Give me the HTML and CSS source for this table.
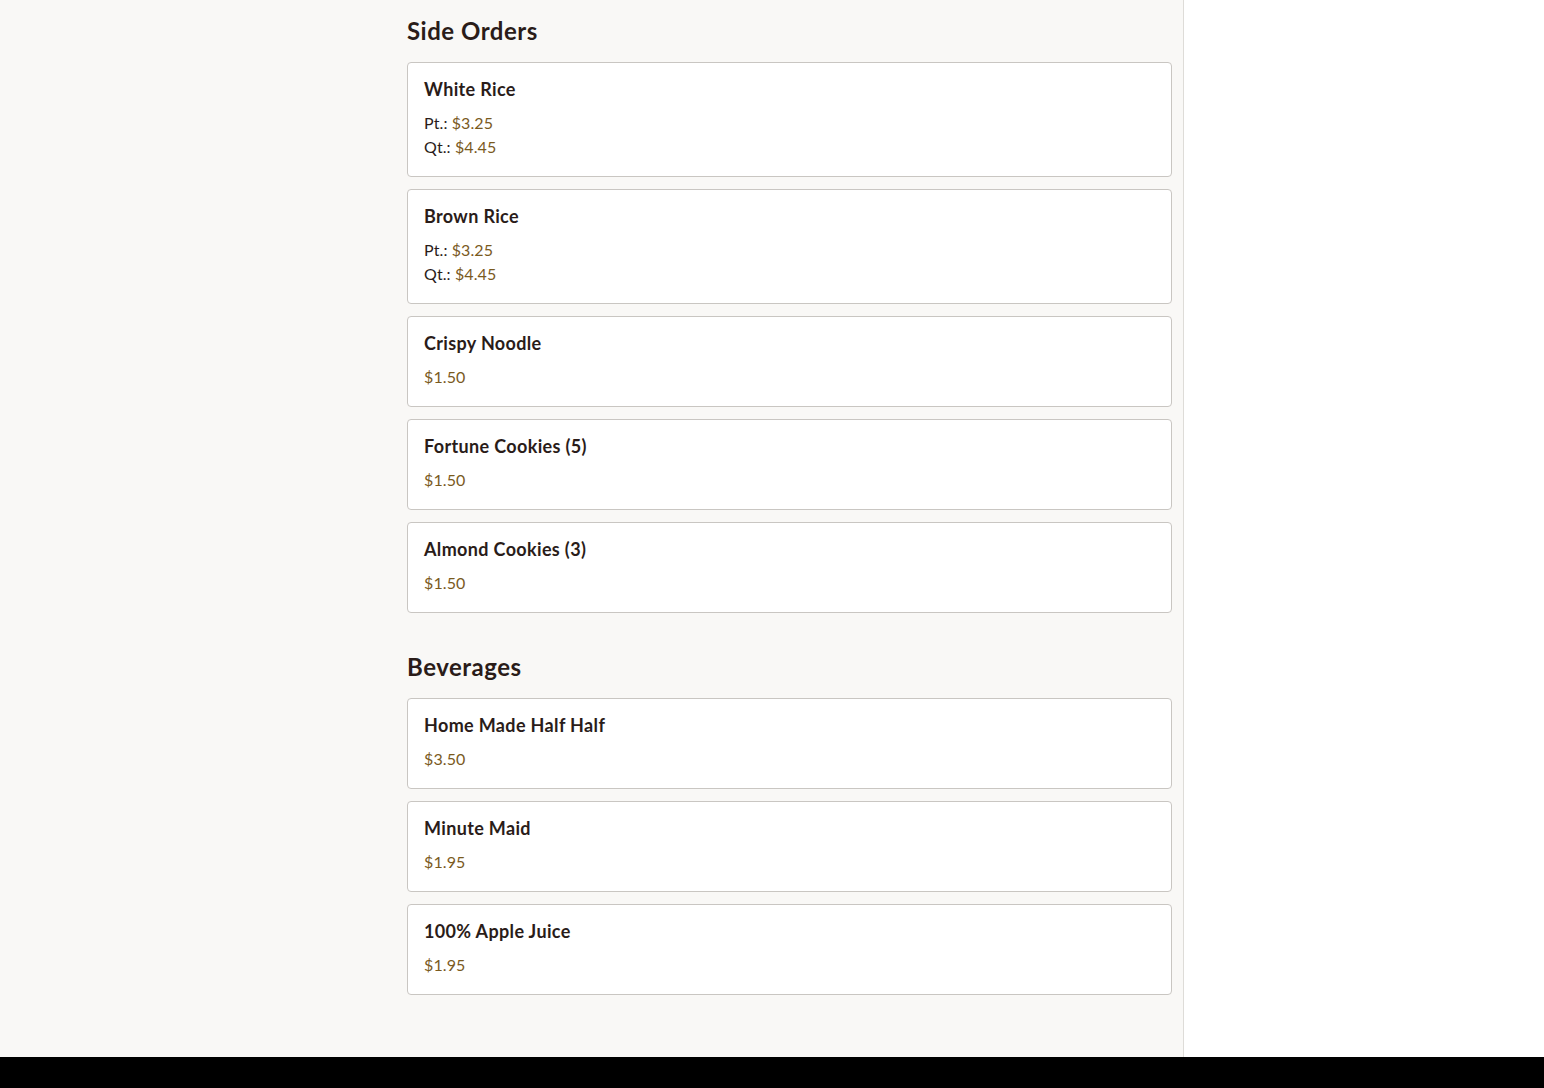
FILE: index.html
```html
<!DOCTYPE html>
<html lang="en">
<head>
<meta charset="utf-8">
<title>Menu</title>
<link rel="stylesheet" href="styles.css">
</head>
<body>
<div class="layout">
  <main class="main">
    <section class="section">
      <h2 class="section-title">Side Orders</h2>
      <div class="cards">
        <div class="card">
          <h3 class="item-name">White Rice</h3>
          <div class="prices">
            <div class="price-row">Pt.: <span class="price">$3.25</span></div>
            <div class="price-row">Qt.: <span class="price">$4.45</span></div>
          </div>
        </div>
        <div class="card">
          <h3 class="item-name">Brown Rice</h3>
          <div class="prices">
            <div class="price-row">Pt.: <span class="price">$3.25</span></div>
            <div class="price-row">Qt.: <span class="price">$4.45</span></div>
          </div>
        </div>
        <div class="card">
          <h3 class="item-name">Crispy Noodle</h3>
          <div class="prices"><div class="price-row"><span class="price">$1.50</span></div></div>
        </div>
        <div class="card">
          <h3 class="item-name">Fortune Cookies (5)</h3>
          <div class="prices"><div class="price-row"><span class="price">$1.50</span></div></div>
        </div>
        <div class="card">
          <h3 class="item-name">Almond Cookies (3)</h3>
          <div class="prices"><div class="price-row"><span class="price">$1.50</span></div></div>
        </div>
      </div>
    </section>
    <section class="section">
      <h2 class="section-title">Beverages</h2>
      <div class="cards">
        <div class="card">
          <h3 class="item-name">Home Made Half Half</h3>
          <div class="prices"><div class="price-row"><span class="price">$3.50</span></div></div>
        </div>
        <div class="card">
          <h3 class="item-name">Minute Maid</h3>
          <div class="prices"><div class="price-row"><span class="price">$1.95</span></div></div>
        </div>
        <div class="card">
          <h3 class="item-name">100% Apple Juice</h3>
          <div class="prices"><div class="price-row"><span class="price">$1.95</span></div></div>
        </div>
      </div>
    </section>
  </main>
  <aside class="side"></aside>
</div>
<footer class="footer"></footer>
</body>
</html>
```
FILE: styles.css
```css
* { box-sizing: border-box; }
html, body { margin: 0; padding: 0; }
body {
  font-family: "Lato", "Open Sans", sans-serif;
  color: #2a1c19;
  background: #ffffff;
}
.layout {
  display: flex;
  height: 1057px;
}
.main {
  width: 1184px;
  flex: none;
  background: #f9f8f6;
  border-right: 1px solid #dedcd8;
  padding: 16px 11px 0 407px;
}
.side {
  flex: 1;
  background: #ffffff;
}
.section { margin-bottom: 39px; }
.section-title {
  margin: 0 0 17px;
  font-size: 24px;
  line-height: 29px;
  font-weight: 700;
  letter-spacing: 0.5px;
}
.cards {
  display: flex;
  flex-direction: column;
  gap: 12px;
}
.card {
  background: #ffffff;
  border: 1px solid #c9c6c2;
  border-radius: 4px;
  padding: 15px 16px 17px;
}
.item-name {
  margin: 0 0 11px;
  font-size: 18px;
  line-height: 22px;
  font-weight: 700;
  letter-spacing: 0.35px;
}
.price-row {
  font-size: 16px;
  line-height: 24px;
  letter-spacing: 0.1px;
}
.price { color: #7a5a1e; }
.footer {
  height: 31px;
  background: #000000;
}
```
